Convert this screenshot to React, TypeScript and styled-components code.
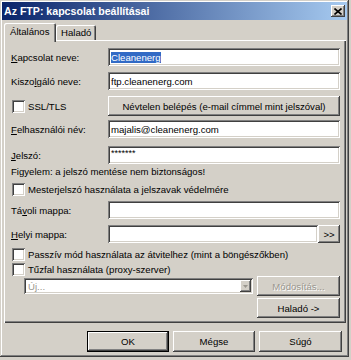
import React from 'react';
import styled, { createGlobalStyle, css } from 'styled-components';

const Global = createGlobalStyle`
  html, body { margin: 0; padding: 0; background: #d4d0c8; }
  body { font-family: "Liberation Sans", Arial, sans-serif; font-size: 9.6px; color: #000; }
  * { box-sizing: border-box; }
`;

const raised = css`
  box-shadow: inset -1px -1px #404040, inset 1px 1px #ffffff, inset -2px -2px #808080, inset 2px 2px #d4d0c8;
`;
const sunken = css`
  box-shadow: inset 1px 1px #808080, inset -1px -1px #ffffff, inset 2px 2px #404040, inset -2px -2px #d4d0c8;
`;

const Window = styled.div`
  width: 349px;
  height: 357px;
  background: #d4d0c8;
  box-shadow: inset -1px -1px #404040, inset 1px 1px #d4d0c8, inset -2px -2px #808080, inset 2px 2px #ffffff;
  padding: 2px;
  display: flex;
  flex-direction: column;
`;

const TitleBar = styled.div`
  height: 18px;
  display: flex;
  align-items: center;
  justify-content: space-between;
  padding: 0 2px 0 2px;
  background: linear-gradient(to right, #0a246a, #a6caf0);
  color: #fff;
  font-weight: bold;
  font-size: 10.6px;
`;

const CloseBtn = styled.div`
  width: 14px;
  height: 12px;
  background: #d4d0c8;
  ${raised};
  display: flex;
  align-items: center;
  justify-content: center;
`;

const TabStrip = styled.div`
  display: flex;
  align-items: flex-end;
  height: 19px;
  margin-top: 1px;
  padding-left: 2px;
  position: relative;
  z-index: 1;
`;

const Tab = styled.div<{ $active?: boolean; $w: number }>`
  width: ${p => p.$w}px;
  height: ${p => (p.$active ? 19 : 15)}px;
  margin-bottom: ${p => (p.$active ? -2 : 0)}px;
  padding: ${p => (p.$active ? '0 0 3px 6px' : '0 0 0 5px')};
  display: flex;
  align-items: center;
  background: #d4d0c8;
  border-radius: 2px 2px 0 0;
  box-shadow: inset 1px 1px #ffffff, inset -1px 0 #404040, inset -2px 0 #808080;
`;

const Panel = styled.div`
  margin: 0 1px 0 2px;
  padding: 8px 6px 5px 7px;
  box-shadow: inset 1px 1px #ffffff, inset -1px -1px #404040, inset -2px -2px #808080;
  display: flex;
  flex-direction: column;
`;

const Row = styled.div<{ $mt?: number; $h: number; $end?: boolean }>`
  display: flex;
  align-items: center;
  margin-top: ${p => p.$mt ?? 0}px;
  height: ${p => p.$h}px;
  justify-content: ${p => (p.$end ? 'flex-end' : 'flex-start')};
`;

const Label = styled.div`
  width: 97px;
  flex: none;
  display: flex;
  align-items: center;
  white-space: nowrap;
`;

const U = styled.span`
  text-decoration: underline;
`;

const TextInput = styled.div<{ $w?: number }>`
  ${p => (p.$w ? `width: ${p.$w}px; flex: none;` : 'flex: 1;')}
  height: 100%;
  background: #fff;
  ${sunken};
  display: flex;
  align-items: center;
  padding-left: 3px;
  white-space: nowrap;
  overflow: hidden;
`;

const Selected = styled.span`
  background: #316ac5;
  color: #fff;
`;

const Password = styled.span`
  font-size: 9px;
  position: relative;
  top: -2px;
`;

const Button = styled.div<{ $w?: number; $disabled?: boolean; $default?: boolean }>`
  ${p => (p.$w ? `width: ${p.$w}px; flex: none;` : 'flex: 1;')}
  height: 100%;
  display: flex;
  align-items: center;
  justify-content: center;
  background: #d4d0c8;
  white-space: nowrap;
  color: ${p => (p.$disabled ? '#9a978f' : '#000')};
  text-shadow: ${p => (p.$disabled ? '1px 1px #fff' : 'none')};
  ${p =>
    p.$default
      ? css`box-shadow: inset 0 0 0 1px #000, inset -2px -2px #404040, inset 2px 2px #ffffff, inset -3px -3px #808080;`
      : raised};
`;

const Box = styled.div`
  width: 13px;
  height: 13px;
  flex: none;
  margin-left: 1px;
  margin-right: 3px;
  background: #fff;
  ${sunken};
`;

const CheckRow = styled(Row)`
  white-space: nowrap;
`;

const Text = styled.div`
  white-space: nowrap;
`;

const Combo = styled.div`
  width: 229px;
  height: 16px;
  margin-left: 13px;
  margin-right: 4px;
  background: #fff;
  ${sunken};
  display: flex;
  align-items: center;
  padding: 2px;
`;

const ComboText = styled.div`
  flex: 1;
  color: #9a978f;
  padding-left: 2px;
`;

const ComboArrow = styled.div`
  width: 11px;
  height: 12px;
  background: #d4d0c8;
  ${raised};
  display: flex;
  align-items: center;
  justify-content: center;
`;

const Footer = styled.div`
  display: flex;
  justify-content: flex-end;
  gap: 4px;
  margin-top: 8px;
  padding-right: 5px;
  height: 21px;
`;

export default function App() {
  return (
    <>
      <Global />
      <Window>
        <TitleBar>
          <span>Az FTP: kapcsolat beállításai</span>
          <CloseBtn>
            <svg width="8" height="7" viewBox="0 0 8 7">
              <path d="M0.5 0.5 L7.5 6.5 M7.5 0.5 L0.5 6.5" stroke="#000" strokeWidth="1.6" />
            </svg>
          </CloseBtn>
        </TitleBar>
        <TabStrip>
          <Tab $active $w={52}>Általános</Tab>
          <Tab $w={40}>Haladó</Tab>
        </TabStrip>
        <Panel>
          <Row $h={18}>
            <Label><U>K</U>apcsolat neve:</Label>
            <TextInput><Selected>Cleanenerg</Selected></TextInput>
          </Row>
          <Row $mt={6} $h={18}>
            <Label>Kiszo<U>l</U>gáló neve:</Label>
            <TextInput>ftp.cleanenerg.com</TextInput>
          </Row>
          <Row $mt={6} $h={20}>
            <Label><Box />SSL/TLS</Label>
            <Button>Névtelen belépés (e-mail címmel mint jelszóval)</Button>
          </Row>
          <Row $mt={4} $h={18}>
            <Label><U>F</U>elhasználói név:</Label>
            <TextInput>majalis@cleanenerg.com</TextInput>
          </Row>
          <Row $mt={8} $h={18}>
            <Label><U>J</U>elszó:</Label>
            <TextInput><Password>*******</Password></TextInput>
          </Row>
          <Row $mt={1} $h={12}>
            <Text>Figyelem: a jelszó mentése nem biztonságos!</Text>
          </Row>
          <CheckRow $mt={6} $h={13}>
            <Box />Mesterjelszó használata a jelszavak védelmére
          </CheckRow>
          <Row $mt={5} $h={18}>
            <Label>Tá<U>v</U>oli mappa:</Label>
            <TextInput />
          </Row>
          <Row $mt={6} $h={18}>
            <Label><U>H</U>elyi mappa:</Label>
            <TextInput />
            <Button $w={22}>&gt;&gt;</Button>
          </Row>
          <CheckRow $mt={5} $h={13}>
            <Box />Passzív mód használata az átvitelhez (mint a böngészőkben)
          </CheckRow>
          <CheckRow $mt={2} $h={13}>
            <Box />Tűzfal használata (proxy-szerver)
          </CheckRow>
          <Row $h={20}>
            <Combo>
              <ComboText>Új...</ComboText>
              <ComboArrow>
                <svg width="5" height="3" viewBox="0 0 5 3">
                  <path d="M0 0 H5 L2.5 3 Z" fill="#9a978f" />
                </svg>
              </ComboArrow>
            </Combo>
            <Button $w={83} $disabled>Módosítás...</Button>
          </Row>
          <Row $mt={2} $h={20} $end>
            <Button $w={83}>Haladó -&gt;</Button>
          </Row>
        </Panel>
        <Footer>
          <Button $w={82} $default>OK</Button>
          <Button $w={82}>Mégse</Button>
          <Button $w={83}>Súgó</Button>
        </Footer>
      </Window>
    </>
  );
}
